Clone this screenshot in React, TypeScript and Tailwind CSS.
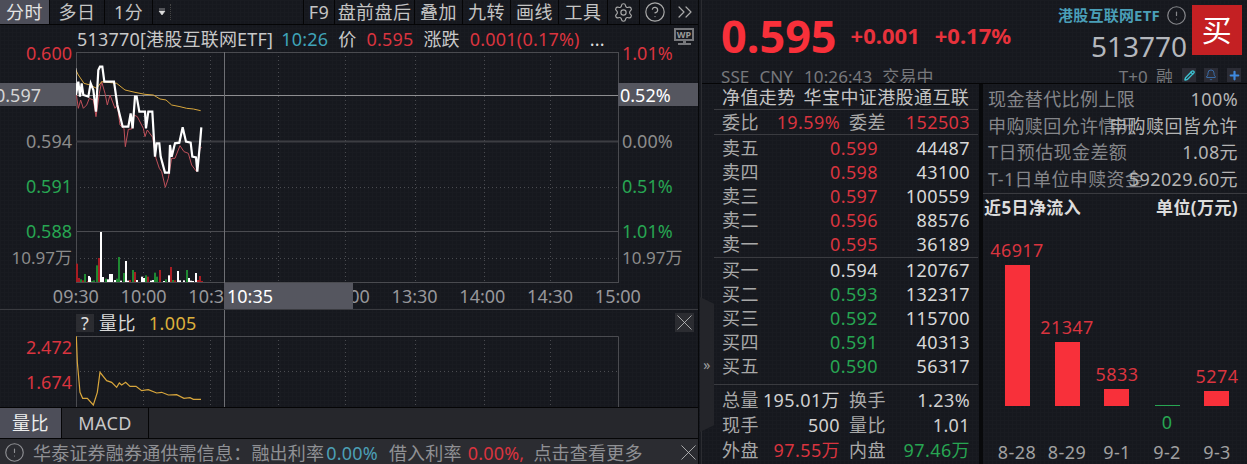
import { Settings, CircleHelp, ChevronsRight, X, Pencil, Bell, Plus, CircleAlert } from "lucide-react";

const RED = "text-[#d9343f]";
const GREEN = "text-[#27a552]";

const white = "46,55 48,135 55,95 60,140 65,100 70,135 85,140 92,100 100,120 108,185 115,60 120,50 127,50 133,95 162,95 172,165 188,230 205,230 212,190 218,235 225,140 230,140 238,185 255,185 258,235 265,185 277,185 285,320 290,280 298,280 302,320 315,368 327,368 330,285 335,320 345,280 358,278 368,232 378,275 392,278 397,320 408,322 412,365 420,280 424,232";
const red = "46,100 50,140 55,175 62,150 70,175 80,165 88,145 100,150 108,200 118,130 125,95 135,130 142,165 150,135 165,175 172,165 180,225 192,235 196,290 205,238 215,237 222,195 232,200 250,235 255,260 262,240 278,262 288,325 298,355 305,365 316,412 325,385 335,325 345,325 360,287 372,305 385,310 395,345 410,365 420,295 425,292";
const yellow = "45,55 55,75 72,100 90,105 110,115 125,95 170,100 195,120 225,127 255,133 280,135 300,147 318,150 335,165 360,170 380,175 400,177 422,182";
const ratio = "229,322 232,400 240,490 248,508 262,508 280,528 292,490 300,430 320,455 335,460 350,475 358,462 365,468 377,460 390,472 408,472 425,485 445,482 470,492 485,490 505,498 530,497 552,508 570,506 580,511 603,511";

// x and height in 3x zoom units, measured off the reference
const vol: [number, number, string][] = [
  [48, 55, "r"], [54, 12, "r"], [60, 8, "g"], [67, 5, "r"], [73, 24, "g"], [80, 3, "r"], [83, 18, "w"], [88, 14, "w"], [94, 3, "g"], [100, 5, "g"],
  [109, 50, "g"], [115, 72, "r"], [121, 150, "w"], [127, 15, "w"], [136, 10, "g"], [142, 8, "w"], [148, 24, "w"], [153, 24, "w"], [163, 6, "w"], [169, 10, "g"],
  [175, 75, "g"], [181, 4, "w"], [190, 27, "g"], [196, 63, "w"], [202, 4, "w"], [208, 6, "r"], [216, 36, "g"], [222, 30, "r"], [229, 6, "w"], [243, 16, "w"],
  [249, 12, "w"], [255, 20, "g"], [261, 16, "r"], [270, 4, "w"], [276, 6, "w"], [283, 28, "g"], [289, 16, "g"], [296, 36, "r"], [308, 3, "w"], [315, 8, "g"],
  [325, 20, "w"], [331, 45, "r"], [337, 6, "g"], [343, 5, "r"], [352, 33, "w"], [358, 5, "w"], [370, 5, "w"], [379, 36, "g"], [385, 12, "w"], [391, 4, "w"],
  [397, 3, "w"], [406, 27, "w"], [412, 6, "r"], [418, 18, "r"], [424, 3, "r"],
];
const volColor: Record<string, string> = { r: "#a81c22", g: "#1f8a32", w: "#ffffff" };

const tools = [
  { label: "盘前盘后", w: "w-[80px]" },
  { label: "叠加", w: "w-[48px]" },
  { label: "九转", w: "w-[48px]" },
  { label: "画线", w: "w-[48px]" },
  { label: "工具", w: "w-[49px]" },
];

const verticals = [143, 210, 278, 345, 415, 484, 550];

const asks = [
  ["卖五", "0.599", "44487"],
  ["卖四", "0.598", "43100"],
  ["卖三", "0.597", "100559"],
  ["卖二", "0.596", "88576"],
  ["卖一", "0.595", "36189"],
];
const bids = [
  ["买一", "0.594", "120767", "text-[#d8d8d8]"],
  ["买二", "0.593", "132317", GREEN],
  ["买三", "0.592", "115700", GREEN],
  ["买四", "0.591", "40313", GREEN],
  ["买五", "0.590", "56317", GREEN],
];
const info = [
  ["现金替代比例上限", "100%"],
  ["申购赎回允许情况", "申购赎回皆允许"],
  ["T日预估现金差额", "1.08元"],
  ["T-1日单位申赎资金", "592029.60元"],
];
const flows = [
  { date: "8-28", value: "46917", h: 141 },
  { date: "8-29", value: "21347", h: 64 },
  { date: "9-1", value: "5833", h: 17 },
  { date: "9-2", value: "0", h: 0 },
  { date: "9-3", value: "5274", h: 15 },
];

function PriceRow({ label, price, qty, color }: { label: string; price: string; qty: string; color: string }) {
  return (
    <div className="flex h-[24px] items-center pl-[8px] pr-[8px] leading-none">
      <span className="w-[36px] text-[#a8a8a8]">{label}</span>
      <span className={`w-[120px] text-right ${color}`}>{price}</span>
      <span className="flex-1 text-right text-[#d8d8d8]">{qty}</span>
    </div>
  );
}

function Pair({ a, b, c, d, bc = "text-[#d0d0d0]", dc = "text-[#d0d0d0]" }: { a: string; b: string; c: string; d: string; bc?: string; dc?: string }) {
  return (
    <div className="flex h-[25px] items-center pl-[8px] pr-[8px] leading-none">
      <span className="w-[36px] shrink-0 text-[#a8a8a8]">{a}</span>
      <span className={`w-[82px] shrink-0 text-right ${bc}`}>{b}</span>
      <span className="ml-[9px] w-[36px] shrink-0 text-[#a8a8a8]">{c}</span>
      <span className={`flex-1 text-right ${dc}`}>{d}</span>
    </div>
  );
}

export default function App() {
  return (
    <div className="relative flex h-[464px] w-[1247px] overflow-hidden whitespace-nowrap bg-[#16181e] bg-[linear-gradient(#191b21_1px,transparent_1px),linear-gradient(90deg,#191b21_1px,transparent_1px)] bg-[size:4px_4px] text-[18px] leading-none tracking-[0.4px] text-[#c8c8c8] [font-family:'Noto_Sans','Noto_Sans_CJK_SC',sans-serif]">
      {/* left: chart */}
      <div className="flex w-[699px] shrink-0 flex-col border-r border-[#08090b]">
        <div className="flex h-[25px] shrink-0 items-center border-b border-[#050506] text-[#c4c4c4]">
          <div className="flex h-full w-[49px] items-center justify-center bg-[#4d4e59] text-[#e4e4e4]">分时</div>
          <div className="flex h-full w-[55px] items-center justify-center border-l border-[#050506]">多日</div>
          <div className="flex h-full w-[48px] items-center justify-center border-l border-[#050506]">1分</div>
          <div className="flex h-full w-[151px] items-center border-l border-[#050506] pl-[5px]">
            <svg width="8" height="8" viewBox="0 0 8 8" className="text-[#ddd]">
              <path d="M1 1h6M1 3h6L4 7z" fill="currentColor" stroke="currentColor" strokeWidth="0.6" />
            </svg>
            <span className="ml-[4px] h-[16px] border-l border-dotted border-[#444]" />
          </div>
          <div className="flex h-full w-[31px] items-center justify-center border-l border-[#050506]">F9</div>
          {tools.map((t) => (
            <div key={t.label} className={`flex h-full ${t.w} items-center justify-center border-l border-[#050506]`}>
              {t.label}
            </div>
          ))}
          <div className="flex h-full w-[32px] items-center justify-center border-l border-[#050506] text-[#a9a9a9]">
            <Settings size={21} strokeWidth={1.3} />
          </div>
          <div className="flex h-full w-[31px] items-center justify-center border-l border-[#050506] text-[#a9a9a9]">
            <CircleHelp size={22} strokeWidth={1.3} />
          </div>
          <div className="flex h-full flex-1 items-center justify-center border-l border-[#050506] text-[#a9a9a9]">
            <ChevronsRight size={24} strokeWidth={1.2} />
          </div>
        </div>

        <div className="flex h-[27px] shrink-0 items-center pl-[77px] pr-[4px] tracking-[0.2px]">
          <span className="text-[#c8c8c8]">513770[港股互联网ETF]</span>
          <span className="ml-[8px] text-[#3fa3b8]">10:26</span>
          <span className="ml-[10px]">价</span>
          <span className={`ml-[10px] ${RED}`}>0.595</span>
          <span className="ml-[10px]">涨跌</span>
          <span className={`ml-[10px] ${RED}`}>0.001(0.17%)</span>
          <span className="ml-[10px] text-[#ddd]">...</span>
          <span className="relative ml-auto -mt-[2px] flex h-[19px] w-[20px] flex-col items-center">
            <span className="flex h-[13px] w-[20px] items-center justify-center border-2 border-[#77787c] text-[9px] font-bold tracking-normal text-[#9a9a9a]">WP</span>
            <span className="h-[2px] w-[3px] bg-[#77787c]" />
            <span className="h-[2px] w-[13px] bg-[#77787c]" />
          </span>
        </div>

        {/* main chart */}
        <div className="relative flex h-[231px] shrink-0">
          <div className="flex w-[76px] shrink-0 flex-col items-end pr-[4px] leading-[22px] tracking-normal">
            <span className={`-mt-[10px] ${RED}`}>0.600</span>
            <span className="mt-[66px] text-[#8b8b8b]">0.594</span>
            <span className={`mt-[23px] ${GREEN}`}>0.591</span>
            <span className={`mt-[23px] ${GREEN}`}>0.588</span>
            <span className="mt-[5px] text-[17px] text-[#8b8b8b]">10.97万</span>
          </div>
          <svg width="543" height="231" className="shrink-0">
            <rect x="0.5" y="0.5" width="542" height="230" fill="none" stroke="#4a4b50" />
            <line x1="0" x2="542" y1="89.5" y2="89.5" stroke="#3c3d42" strokeWidth="2" />
            <line x1="0" x2="542" y1="179.5" y2="179.5" stroke="#4a4b50" />
            <line x1="0" x2="542" y1="135.5" y2="135.5" stroke="#4a4b50" strokeDasharray="1 3" />
            <line x1="0" x2="542" y1="206.5" y2="206.5" stroke="#4a4b50" strokeDasharray="1 3" />
            {verticals.map((x) => (
              <line key={x} x1={x - 75.5} x2={x - 75.5} y1="0" y2="231" stroke="#4a4b50" strokeDasharray="1 3" />
            ))}
            <line x1="0" x2="542" y1="43.5" y2="43.5" stroke="#8d8d90" />
            <line x1="148.5" x2="148.5" y1="0" y2="231" stroke="#6e6f74" />
            <g transform="translate(-16 -2) scale(0.3333)" fill="none">
              <polyline points={red} stroke="#c0505a" strokeWidth="1" vectorEffect="non-scaling-stroke" />
              <polyline points={yellow} stroke="#d8a63c" strokeWidth="1" vectorEffect="non-scaling-stroke" />
              <polyline points={white} stroke="#ffffff" strokeWidth="2.2" vectorEffect="non-scaling-stroke" />
            </g>
            {vol.map(([x, h, c]) => (
              <rect key={x} x={Math.round(x / 3 - 16)} y={230 - h / 3} width="2" height={h / 3} fill={volColor[c]} />
            ))}
          </svg>
          <div className="flex flex-1 flex-col pl-[3px] leading-[22px] tracking-normal">
            <span className={`-mt-[10px] ${RED}`}>1.01%</span>
            <span className="mt-[66px] text-[#8b8b8b]">0.00%</span>
            <span className={`mt-[23px] ${GREEN}`}>0.51%</span>
            <span className={`mt-[23px] ${GREEN}`}>1.01%</span>
            <span className="mt-[5px] text-[17px] text-[#8b8b8b]">10.97万</span>
          </div>
          <div className="absolute left-0 top-[31px] flex h-[23px] w-[76px] items-center justify-end overflow-hidden bg-[#55565f] pr-[35px] tracking-normal text-[#d5d5d5]">0.597</div>
          <div className="absolute left-[618px] top-[31px] flex h-[23px] w-[80px] items-center bg-[#55565f] pl-[2px] tracking-normal text-white">0.52%</div>
        </div>

        {/* time axis */}
        <div className="relative flex h-[27px] shrink-0 items-center border-b border-[#3a3b40] pl-[42px] tracking-normal text-[#97979b]">
          {["09:30", "10:00", "10:30", "11:00", "13:00", "13:30", "14:00", "14:30", "15:00"].map((t) => (
            <span key={t} className="w-[67.75px] shrink-0 text-center">{t}</span>
          ))}
          <div className="absolute left-[224px] top-0 flex h-[26px] w-[129px] items-center bg-[#55565f] pl-[3px] text-white">10:35</div>
        </div>

        {/* lower indicator */}
        <div className="relative flex h-[97px] shrink-0 flex-col overflow-hidden">
          <div className="flex h-[26px] shrink-0 items-center pl-[76px]">
            <span className="flex h-[18px] w-[18px] items-center justify-center bg-[#2b2c31] text-[#ddd]">?</span>
            <span className="ml-[5px] text-[#d8d8d8]">量比</span>
            <span className="ml-[13px] text-[#dcb03c]">1.005</span>
          </div>
          <div className="flex flex-1">
            <div className="flex w-[76px] shrink-0 flex-col items-end pr-[4px] leading-[22px] tracking-normal">
              <span className={RED}>2.472</span>
              <span className={`mt-[13px] ${RED}`}>1.674</span>
            </div>
            <svg width="543" height="71" className="shrink-0">
              <path d="M0.5 71V0.5H542.5V71" fill="none" stroke="#4a4b50" />
              <line x1="0" x2="542" y1="35.5" y2="35.5" stroke="#4a4b50" strokeDasharray="1 3" />
              {verticals.map((x) => (
                <line key={x} x1={x - 75.5} x2={x - 75.5} y1="0" y2="71" stroke="#4a4b50" strokeDasharray="1 3" />
              ))}
              <g transform="translate(-76 -107) scale(0.3333)" fill="none">
                <polyline points={ratio} stroke="#d8a63c" strokeWidth="1.2" vectorEffect="non-scaling-stroke" />
              </g>
            </svg>
          </div>
          <div className="absolute bottom-0 left-[224px] top-0 w-px bg-[#6e6f74]" />
          <div className="absolute left-[675px] top-[3px] flex h-[19px] w-[19px] items-center justify-center bg-[#2b2c31] text-[#c8c8c8]">
            <X size={27} strokeWidth={0.7} className="shrink-0" />
          </div>
        </div>

        {/* tabs */}
        <div className="flex h-[32px] shrink-0 items-stretch border-y border-[#050506] bg-[#26272c]">
          <div className="flex w-[61px] items-center justify-center bg-[#4d4e59] text-[#eee]">量比</div>
          <div className="flex w-[88px] items-center justify-center border-x border-[#050506] text-[#c8c8c8]">MACD</div>
        </div>

        {/* notice */}
        <div className="flex flex-1 items-center bg-[#2b2c31] pl-[4px] tracking-[0.2px] text-[#8f9094]">
          <CircleAlert size={21} strokeWidth={1.3} className="shrink-0" />
          <span className="ml-[8px]">华泰证券融券通供需信息：融出利率</span>
          <span className="ml-[2px] text-[#4c9fb5]">0.00%</span>
          <span className="ml-[11px]">借入利率</span>
          <span className={`ml-[6px] ${RED}`}>0.00%,</span>
          <span className="ml-[9px]">点击查看更多</span>
          <X size={27} strokeWidth={0.7} className="ml-[32px] shrink-0 text-[#c8c8c8]" />
        </div>
      </div>

      {/* right: quote */}
      <div className="ml-[2px] flex min-w-0 flex-1 flex-col border-l border-[#2b2c31]">
        <div className="flex h-[84px] shrink-0 flex-col border-b border-[#050506]">
          <div className="flex h-[62px] shrink-0 items-center pl-[19px] pr-[5px]">
            <span className="mt-[8px] text-[45px] font-bold tracking-normal text-[#f8303a]">0.595</span>
            <span className="mt-[8px] ml-[14px] text-[22px] font-bold tracking-normal text-[#e8323c]">+0.001</span>
            <span className="mt-[8px] ml-[15px] text-[22px] font-bold tracking-normal text-[#e8323c]">+0.17%</span>
            <div className="ml-auto flex flex-col items-end self-start pt-[5px]">
              <div className="flex items-center">
                <span className="text-[15px] font-bold tracking-[0.2px] text-[#4a9fb8]">港股互联网ETF</span>
                <CircleAlert size={21} strokeWidth={1.4} className="ml-[6px] text-[#85868a]" />
              </div>
              <span className="mt-[6px] text-[28px] tracking-normal text-[#b4b7bd]">513770</span>
            </div>
            <div className="ml-[5px] mt-[5px] flex h-[50px] w-[50px] items-center justify-center self-start bg-[#c42023] text-[30px] text-white">买</div>
          </div>
          <div className="flex flex-1 items-start overflow-hidden pl-[19px] pr-[6px] pt-[6px] text-[17px] tracking-[0.1px] text-[#77787c]">
            <span>SSE</span>
            <span className="ml-[10px]">CNY</span>
            <span className="ml-[11px]">10:26:43</span>
            <span className="ml-[10px]">交易中</span>
            <span className="ml-auto">T+0</span>
            <span className="ml-[8px]">融</span>
            <span className="ml-[9px] flex h-[14px] w-[14px] items-center justify-center bg-[#2b2c35] text-[#3cc0d0]"><Pencil size={11} strokeWidth={3} /></span>
            <span className="ml-[8px] flex h-[14px] w-[14px] items-center justify-center bg-[#2b2c35] text-[#3f7fc8]"><Bell size={12} strokeWidth={1.5} /></span>
            <span className="ml-[9px] flex h-[14px] w-[14px] items-center justify-center bg-[#2b2c35] text-[#3f8ae0]"><Plus size={13} strokeWidth={4} /></span>
          </div>
        </div>

        <div className="flex min-h-0 flex-1">
          {/* order book */}
          <div className="ml-[12px] flex w-[264px] shrink-0 flex-col">
            <div className="flex h-[26px] shrink-0 items-center border-b border-[#3a3b40] pl-[8px] text-[#c4c4c4]">
              净值走势<span className="ml-[8px]">华宝中证港股通互联</span>
            </div>
            <div className="flex h-[25px] shrink-0 items-center border-b border-[#3a3b40] pl-[8px] pr-[8px]">
              <span className="w-[36px] text-[#a8a8a8]">委比</span>
              <span className={`w-[82px] text-right ${RED}`}>19.59%</span>
              <span className="ml-[9px] w-[36px] text-[#a8a8a8]">委差</span>
              <span className={`flex-1 text-right ${RED}`}>152503</span>
            </div>
            <div className="flex h-[123px] shrink-0 flex-col justify-center border-b border-[#3a3b40]">
              {asks.map(([l, p, q]) => (
                <PriceRow key={l} label={l} price={p} qty={q} color={RED} />
              ))}
            </div>
            <div className="flex h-[127px] shrink-0 flex-col border-b border-[#3a3b40]">
              {bids.map(([l, p, q, c]) => (
                <PriceRow key={l} label={l} price={p} qty={q} color={c} />
              ))}
            </div>
            <div className="flex flex-1 flex-col justify-center">
              <Pair a="总量" b="195.01万" c="换手" d="1.23%" />
              <Pair a="现手" b="500" c="量比" d="1.01" />
              <Pair a="外盘" b="97.55万" c="内盘" d="97.46万" bc={RED} dc={GREEN} />
            </div>
          </div>

          {/* fund info */}
          <div className="ml-[1px] flex min-w-0 flex-1 flex-col border-l-[4px] border-[#08090b]">
            <div className="flex h-[110px] shrink-0 flex-col border-b border-[#3a3b40] pb-[1px] pl-[5px] pr-[9px] pt-[2px]">
              {info.map(([k, v]) => (
                <div key={k} className="grid h-[27px] items-center">
                  <span className="col-start-1 row-start-1 text-[#85868a]">{k}</span>
                  <span className="col-start-1 row-start-1 justify-self-end text-[#b4b4b4]">{v}</span>
                </div>
              ))}
            </div>
            <div className="flex h-[26px] shrink-0 items-center justify-between pl-[1px] pr-[9px] text-[17px] font-bold text-[#dcdcdc]">
              <span>近5日净流入</span>
              <span>单位(万元)</span>
            </div>
            <div className="flex flex-1 pl-[9px]">
              {flows.map((f) => (
                <div key={f.date} className="flex w-[50px] shrink-0 flex-col items-center">
                  <div className="flex h-[186px] shrink-0 flex-col items-center justify-end">
                    {f.h > 0 && <span className={`mb-[4px] leading-[22px] ${RED}`}>{f.value}</span>}
                    {f.h > 0 ? (
                      <div className="w-[25px] bg-[#f8303a]" style={{ height: f.h }} />
                    ) : (
                      <div className="h-px w-[25px] bg-[#27a552]" />
                    )}
                  </div>
                  <span className={`mt-[5px] h-[22px] leading-[22px] ${GREEN}`}>{f.h === 0 ? f.value : ""}</span>
                  <span className="mt-[8px] leading-[22px] text-[#a0a0a0]">{f.date}</span>
                </div>
              ))}
            </div>
          </div>
        </div>
      </div>

      {/* collapse handle sitting on the panel seam */}
      <div className="absolute left-[700px] top-[297px] flex h-[135px] w-[14px] items-center justify-center bg-[#24252a] text-[14px] text-[#a0a0a0] [clip-path:polygon(0_0,100%_5%,100%_95%,0_100%)]">»</div>
    </div>
  );
}
